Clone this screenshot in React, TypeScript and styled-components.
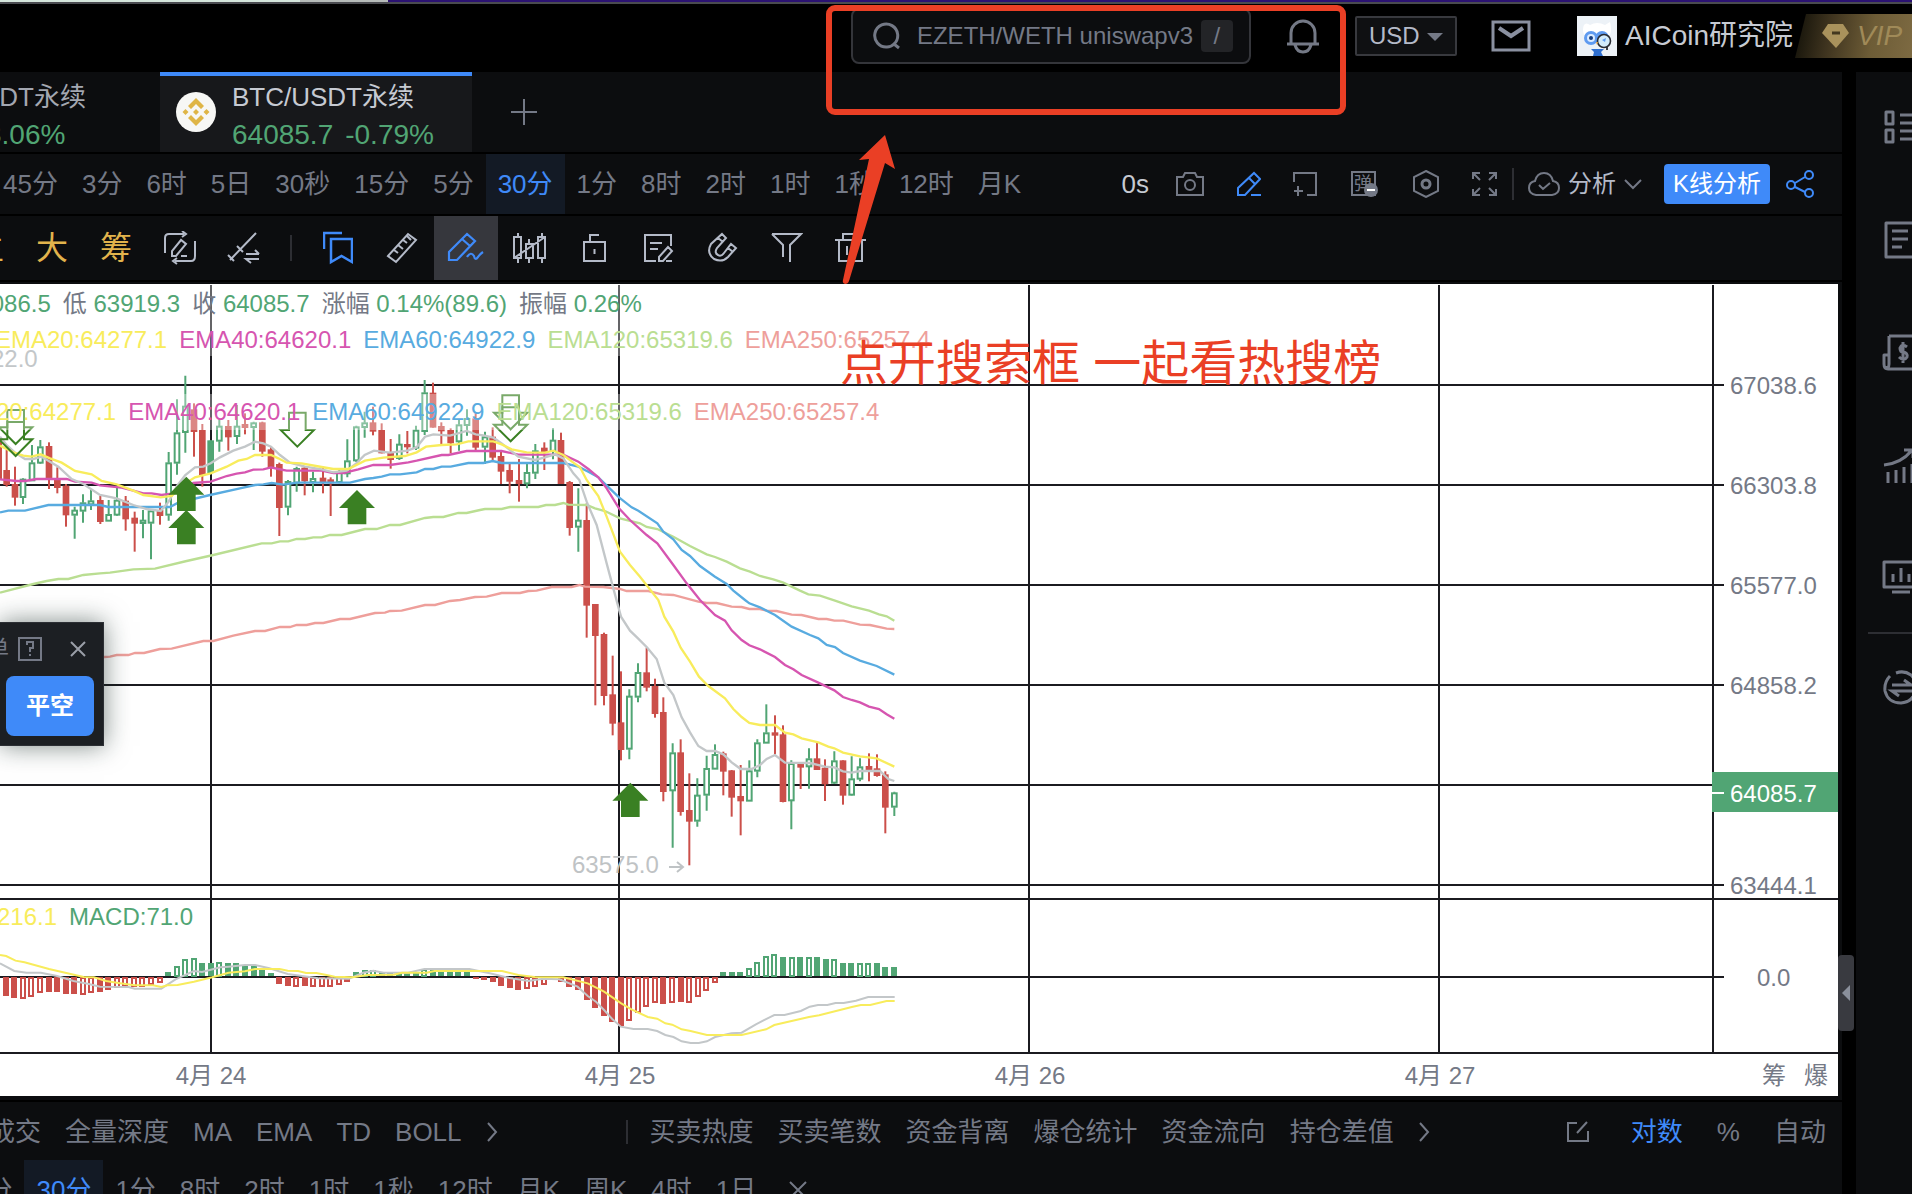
import React from 'react';
import styled, { createGlobalStyle } from 'styled-components';

const c = {
  panel: '#0c0d0f',
  muted: '#747986',
  icon: '#b4bac8',
  blue: '#3f8af9',
  green: '#51a574',
  red: '#cb4f4a',
  gold: '#e2b34c',
  grey: '#c3c7c9',
  yellow: '#f8ec5c',
  magenta: '#d655b0',
  sky: '#58abe0',
  lime: '#bade92',
  pink: '#ee9f9b',
  grid: '#1b1b20',
  signal: '#3a8023',
  note: '#ea3f25',
};

const font = '"Liberation Sans", "Noto Sans CJK SC", sans-serif';

const Global = createGlobalStyle`
  * { box-sizing: border-box; }
  body { margin: 0; background: #000; font-family: ${font}; overflow: hidden; }
  button, input, select { font: inherit; color: inherit; margin: 0; padding: 0; border: 0; background: none; }
  svg { display: block; flex: none; }
`;

/* ---------- shell ---------- */
const Page = styled.div`
  position: relative;
  height: 100vh;
  display: flex;
  flex-direction: column;
  overflow: hidden;
  color: ${c.muted};
`;
const WindowEdge = styled.div`
  height: 4px;
  flex: none;
  border-bottom: 2px solid #4a4b50;
  background: linear-gradient(90deg, #d5e6dc 0 300px, #b6bbb9 300px 388px, #2b1272 388px);
`;
const Header = styled.header`
  height: 68px;
  flex: none;
  display: flex;
  align-items: center;
  justify-content: flex-end;
  padding-bottom: 4px;
  background: #000;
`;
const Body = styled.div`
  flex: 1;
  min-height: 0;
  display: grid;
  grid-template-columns: minmax(0, 1fr) 56px;
  column-gap: 14px;
`;
const Main = styled.main`
  position: relative;
  background: ${c.panel};
  overflow: visible;
`;

/* ---------- header parts ---------- */
const SearchBox = styled.label`
  width: 400px;
  height: 56px;
  display: flex;
  align-items: center;
  padding: 0 18px 0 20px;
  border: 2px solid #34353a;
  border-radius: 8px;
  background: ${c.panel};
`;
const SearchInput = styled.input`
  flex: 1;
  min-width: 0;
  margin-left: 16px;
  font-size: 24px;
  line-height: 32px;
  outline: none;
  &::placeholder { color: ${c.muted}; opacity: 1; }
`;
const Key = styled.kbd`
  width: 32px;
  height: 32px;
  margin-right: -2px;
  border-radius: 4px;
  background: #232427;
  text-align: center;
  font: 24px/32px ${font};
`;
const IconButton = styled.button<{ $ml?: number; $color?: string }>`
  display: flex;
  margin-left: ${(p) => p.$ml ?? 0}px;
  color: ${(p) => p.$color ?? c.muted};
`;
const Currency = styled.label`
  position: relative;
  display: flex;
  width: 102px;
  height: 40px;
  margin-left: 36px;
  border: 2px solid #38393e;
  border-radius: 2px;
  background: #0f1012;
  color: ${c.icon};
  svg { position: absolute; right: 12px; top: 15px; pointer-events: none; }
`;
const CurrencySelect = styled.select`
  width: 100%;
  padding-left: 12px;
  appearance: none;
  font-size: 24px;
  line-height: 36px;
  outline: none;
`;
const UserLink = styled.a`
  display: flex;
  align-items: center;
  gap: 8px;
  margin-left: 46px;
  color: #c6cad2;
  font-size: 28px;
  line-height: 40px;
  text-decoration: none;
  white-space: nowrap;
`;
const Vip = styled.a`
  width: 117px;
  height: 44px;
  margin-left: 2px;
  padding-left: 27px;
  display: flex;
  align-items: center;
  gap: 8px;
  clip-path: polygon(11px 0, 100% 0, 100% 100%, 0 100%);
  background: linear-gradient(100deg, #111008 0%, #3f341f 30%, #6d5c36 65%, #7d6a42 100%);
  color: #a08a58;
  font-size: 28px;
  font-style: italic;
  text-decoration: none;
`;

/* ---------- tabs ---------- */
const TabBar = styled.nav`
  height: 82px;
  display: flex;
  border-bottom: 2px solid #000;
  color: #a7abb5;
`;
const TabButton = styled.button<{ $active?: boolean }>`
  width: ${(p) => (p.$active ? 312 : 160)}px;
  display: flex;
  align-items: center;
  gap: 16px;
  overflow: hidden;
  text-align: left;
  padding: ${(p) => (p.$active ? '0 0 4px 16px' : '0 0 4px')};
  border-top: 4px solid ${(p) => (p.$active ? c.blue : 'transparent')};
  background: ${(p) => (p.$active ? '#17181b' : 'transparent')};
  color: ${(p) => (p.$active ? '#c6cad2' : '#a3a7b1')};
`;
const TabText = styled.span<{ $cut?: boolean }>`
  display: flex;
  flex-direction: column;
  margin-left: ${(p) => (p.$cut ? -18 : 0)}px;
  padding-top: 8px;
  white-space: nowrap;
  font-size: 26px;
  line-height: 38px;
`;
const Quote = styled.span<{ $inset?: boolean }>`
  display: flex;
  gap: 12px;
  padding-left: ${(p) => (p.$inset ? 4 : 0)}px;
  color: ${c.green};
  font-size: 28px;
`;

/* ---------- toolbars ---------- */
const Bar = styled.div<{ $h: number }>`
  display: flex;
  align-items: center;
  height: ${(p) => p.$h}px;
  border-bottom: 2px solid #000;
  overflow: hidden;
  white-space: nowrap;
`;
const Period = styled.button<{ $active?: boolean }>`
  flex: none;
  height: 60px;
  padding: 0 12px;
  font-size: 26px;
  line-height: 60px;
  color: ${(p) => (p.$active ? c.blue : c.muted)};
  background: ${(p) => (p.$active ? '#131a25' : 'transparent')};
`;
const Periods = styled.div<{ $shift: number }>`
  display: flex;
  margin-left: ${(p) => p.$shift}px;
`;
const Tools = styled.div`
  display: flex;
  align-items: center;
  margin-left: auto;
  margin-right: 28px;
`;
const Lag = styled.span`
  color: #c6cad2;
  font-size: 26px;
  line-height: 32px;
`;
const Rule = styled.span<{ $h: number; $m: string }>`
  width: 2px;
  height: ${(p) => p.$h}px;
  margin: ${(p) => p.$m};
  background: #2d2e33;
`;
const Analyse = styled.button`
  display: flex;
  align-items: center;
  gap: 8px;
  color: ${c.icon};
  font-size: 24px;
  line-height: 36px;
  svg { color: ${c.muted}; }
`;
const Primary = styled.button`
  width: 106px;
  height: 40px;
  margin: 0 16px 0 22px;
  border-radius: 4px;
  background: ${c.blue};
  color: #fff;
  font-size: 24px;
  line-height: 40px;
`;
const Draw = styled.button<{ $tone?: 'gold' | 'blue'; $on?: boolean }>`
  width: 64px;
  height: 64px;
  flex: none;
  display: flex;
  align-items: center;
  justify-content: center;
  font-size: 32px;
  line-height: 64px;
  color: ${(p) => (p.$tone === 'gold' ? c.gold : p.$tone === 'blue' ? c.blue : c.icon)};
  background: ${(p) => (p.$on ? '#36373d' : 'transparent')};
`;
const DrawTools = styled.div`
  display: flex;
  align-items: center;
  margin-left: -44px;
`;
const Indicators = styled.div`
  height: 58px;
  padding-top: 2px;
  display: flex;
  align-items: center;
  overflow: hidden;
  white-space: nowrap;
`;
const Group = styled.div<{ $ml: number; $gap: number }>`
  display: flex;
  align-items: center;
  flex: none;
  gap: ${(p) => p.$gap}px;
  margin-left: ${(p) => p.$ml}px;
`;
const TextButton = styled.button<{ $on?: boolean }>`
  font-size: 26px;
  line-height: 40px;
  color: ${(p) => (p.$on ? c.blue : c.muted)};
`;
const Scale = styled.div`
  display: flex;
  align-items: center;
  margin: 0 16px 0 auto;
  gap: 34px;
  button:first-child { margin-right: 8px; }
`;

/* ---------- chart ---------- */
const ChartBox = styled.section`
  position: relative;
  height: 818px;
  margin-right: 4px;
  border-top: 2px solid ${c.panel};
  border-bottom: 4px solid ${c.panel};
  background: #fff;
  overflow: hidden;
`;
const Legend = styled.div<{ $top: number; $shift: number; $h: number }>`
  position: absolute;
  top: ${(p) => p.$top}px;
  left: 0;
  display: flex;
  gap: 12px;
  height: ${(p) => p.$h}px;
  font-size: 24px;
  line-height: ${(p) => p.$h}px;
  white-space: nowrap;
  background: rgba(255, 255, 255, 0.32);
  > :first-child { margin-left: ${(p) => p.$shift}px; }
`;
const Ink = styled.span<{ $c: string }>`
  color: ${(p) => p.$c};
`;
const Handle = styled.button`
  position: absolute;
  right: -12px;
  top: 883px;
  width: 16px;
  height: 76px;
  display: flex;
  align-items: center;
  justify-content: center;
  border-radius: 4px;
  background: #393a40;
  color: #8a8f9b;
`;

/* ---------- side rail ---------- */
const Rail = styled.aside`
  background: ${c.panel};
  overflow: hidden;
  padding: 35px 0 0 26px;
  display: flex;
  flex-direction: column;
`;
const RailButton = styled.button`
  display: flex;
  flex: none;
  width: 40px;
  height: 40px;
  margin-bottom: 73px;
  color: ${c.muted};
`;
const RailLine = styled.hr`
  width: 60px;
  height: 2px;
  margin: -40px 0 35px -14px;
  border: 0;
  background: #2d2e33;
  flex: none;
`;

/* ---------- floating parts ---------- */
const OrderPanel = styled.section`
  position: absolute;
  left: 0;
  top: 622px;
  width: 104px;
  height: 124px;
  padding: 14px 10px 10px 0;
  background: #1c1f23;
  border: 1px solid #2c2f34;
  border-left: 0;
  box-shadow: 0 0 24px rgba(20, 40, 35, 0.55);
`;
const OrderHead = styled.div`
  display: flex;
  align-items: center;
  height: 24px;
  margin-bottom: 15px;
  font-size: 22px;
  line-height: 24px;
`;
const Cut = styled.span`
  margin-left: -13px;
  margin-right: 9px;
`;
const CloseShort = styled.button`
  width: 88px;
  height: 60px;
  margin-left: 6px;
  border-radius: 8px;
  background: ${c.blue};
  color: #fff;
  font-size: 24px;
  font-weight: 700;
  line-height: 60px;
`;
const Highlight = styled.div`
  position: absolute;
  left: 826px;
  top: 5px;
  width: 520px;
  height: 110px;
  border: 6px solid ${c.note};
  border-radius: 9px;
  pointer-events: none;
`;
const Pointer = styled.svg`
  position: absolute;
  left: 836px;
  top: 130px;
  pointer-events: none;
`;
const Caption = styled.p`
  position: absolute;
  left: 840px;
  top: 334px;
  margin: 0;
  color: ${c.note};
  font-size: 48px;
  line-height: 60px;
  white-space: nowrap;
`;

/* ---------- icons ---------- */
type IconProps = { w?: number; h?: number; sw?: number; box?: string; children: React.ReactNode };
const Icon = ({ w = 32, h = 32, sw = 2, box, children }: IconProps) => (
  <svg width={w} height={h} viewBox={box ?? `0 0 ${w} ${h}`} fill="none" stroke="currentColor" strokeWidth={sw} aria-hidden="true">
    {children}
  </svg>
);

const Avatar = () => (
  <svg width="40" height="40" viewBox="0 0 40 40" aria-hidden="true">
    <rect width="40" height="40" fill="#edf2f7" />
    <path d="M7 9 Q9 6 13 9 Q20 5 28 9 L33 6 Q35 13 33 19 H7 Q5 13 7 9Z" fill="#fff" />
    <circle cx="14" cy="22" r="7" fill="#5f9bf0" />
    <circle cx="25" cy="22" r="7" fill="#5f9bf0" />
    <circle cx="14" cy="22" r="4" fill="#dcecff" />
    <circle cx="14" cy="22" r="2" fill="#173e7e" />
    <circle cx="27" cy="25" r="6.5" fill="#d3ecfb" stroke="#2a2c33" strokeWidth="1.6" />
    <path d="M25 24 l4 -2 l-1 4z" fill="#5f9bf0" />
    <path d="M30 31 v3" stroke="#2a2c33" strokeWidth="1.8" />
    <path d="M19 26 l2 0 l-1 3z" fill="#f0a63c" />
    <path d="M14 33 H27 L24 36 L26 40 H16 L17 36Z" fill="#2f6fcf" />
  </svg>
);

const Coin = () => (
  <svg width="40" height="40" viewBox="0 0 40 40" aria-hidden="true">
    <circle cx="20" cy="20" r="20" fill="#f7f7f5" />
    <g fill="#dfb546">
      <path d="M20 6 L28 14 L25 17 L20 12 L15 17 L12 14Z" />
      <path d="M20 34 L28 26 L25 23 L20 28 L15 23 L12 26Z" />
      <path d="M20 17 l3 3 l-3 3 l-3 -3z M9.500 17 l3 3 l-3 3 l-3 -3z M30.500 17 l3 3 l-3 3 l-3 -3z" />
    </g>
  </svg>
);

const chevron = <path d="M2 2 L10 11 L2 20" strokeWidth="2" />;

const drawIcons: Record<string, React.ReactNode> = {
  cycle: (
    <>
      <path d="M1 22 V7 Q1 3 5 3 H20 M18 0 l4 3 l-4 3" />
      <path d="M31 10 V25 Q31 30 27 30 H11 M13 27 l-4 3 l4 3" />
      <path d="M8 25 V20 L17 9 L22 13 L12 25Z M17 25 H23" />
    </>
  ),
  line: <path d="M3 29 L29 2 M1 24 L7 30 M10 15 L16 21 M19 23 H32 M28 19 l4 4 M32 28 H19 l5 4" />,
  bookmark: <path d="M8 8 H29 V31 L18.500 25 L8 31Z M1 18 V2 H19" strokeWidth="2.500" />,
  ruler: <path d="M2 25 L22 3 L30 9 L10 31Z M8 19 l4 3 M12 14 l5 4 M17 9 l4 3 M21 5 l4 4" />,
  pen: <path d="M2 29 V21 L20 3 L28 10 L10 29Z M15 8 L23 15 M20 26 q4 -6 7 -1 q1 5 4 1 q2 -3 5 -5" strokeWidth="2.200" />,
  candles: (
    <path d="M2 6 H9 V27 H2Z M14 13 H21 V27 H14Z M26 6 H33 V27 H26Z M6 2 V6 M6 27 V32 M17 8 V13 M17 27 V32 M30 2 V6 M30 27 V32 M2 27 L33 6" />
  ),
  lock: <path d="M6 11 H27 V30 H6Z M12 11 V4 H21 M16.500 18 V23" />,
  note: <path d="M14 30 H3 V4 H29 V15 M8 12 H20 M8 18 H16 M17 30 V26 L26 16 L30 20 L21 30Z M24 30 H30" />,
  magnet: <path d="M16 3 L20 7 L11 17 Q8 22 12 24 Q15 26 18 22 L25 13 L30 17 L22 26 Q16 32 8 28 Q0 22 5 13Z M12 7 L17 11 M22 17 L27 21" />,
  filter: <path d="M2 3 H31 L20 14 V31 M2 3 L13 14 V26" />,
  trash: <path d="M1 9 H32 M9 9 V3 H23 V9 M5 9 V30 H28 V9 M13 15 V24 M20 15 V24" />,
};

/* ---------- chart data ---------- */
// Plot geometry is stored in thirds of a pixel; each block has its own origin.
const origin = { left: [0, -12], mid: [1320, -12], low: [0, 888], right: [1680, 888] } as const;
type Block = keyof typeof origin;

// x, high, low, open/close top, open/close bottom; prefix g = rising, r = falling
const candles: [Block, string][] = [
  ['left',
    'r-4 450 600 475 598|r20 510 620 570 615|r45 560 677 612 653|g69 595 672 597 653|g96 495 603 548 603|g121 480 552 500 550|r147 487 627 498 597|r172 562 640 597 624|r198 612 740 617 706|g224 680 776 690 706|g249 643 728 668 694|g273 628 690 662 675|r301 648 732 660 726|g326 660 724 703 724|g351 622 708 660 706|r377 648 752 662 718|r404 695 815 713 731|g429 690 775 720 731|g453 688 838 692 730|r480 668 734 690 708|g506 516 722 548 706|g531 358 584 458 550|g556 287 518 378 458|r582 370 530 388 456|r607 432 620 450 585|g632 480 580 482 578|g658 418 515 438 484|r685 420 512 438 472|g711 375 492 438 470|r735 400 463 432 444|g761 425 510 428 443|r787 425 530 427 515|r813 500 590 508 565|r838 548 768 552 684|g864 600 706 604 682|g890 560 635 565 610|r914 560 646 563 604|g939 575 637 595 608|r969 560 640 593 608|r992 592 708 598 610|g1018 570 610 575 608|g1042 478 592 542 582|g1069 437 546 440 543|g1094 395 473 428 443|r1119 380 466 427 455|r1145 430 520 450 520|r1172 477 566 518 540|g1198 463 540 492 536|r1222 453 520 492 502|g1248 437 510 450 505|g1274 300 465 338 455|r1299 308 443 338 443|r1324 427 492 438 454|r1352 445 520 450 490|g1377 420 512 434 486|g1401 388 467 415 437|r1427 400 510 415 503'],
  ['mid',
    'g135 455 552 470 502|r158 442 545 470 533|r183 515 612 528 575|r209 550 640 570 605|r237 537 665 600 612|g261 550 625 577 612|g286 492 597 512 580|r313 487 570 503 516|g339 445 538 480 515|r363 458 612 480 612|r389 603 767 606 744|g415 625 815 720 742|r440 670 1073 720 977'],
  ['right',
    'r106 72 376 72 168|r132 158 376 162 348|r158 227 466 343 431|r183 274 541 427 510|g208 328 538 348 508|g234 250 367 277 352|r260 203 334 277 323|r285 296 413 318 402|r310 352 664 396 636|g338 490 803 518 633|r362 478 707 517 696|r388 580 856 690 725|g412 595 740 645 724|g440 527 692 565 646|g465 493 568 523 568|r490 515 646 520 575|r515 570 710 571 653|r542 555 766 648 664|g568 541 664 572 664|g592 478 592 488 574|g619 373 490 458 490|r645 406 523 457 467|r669 436 667 463 666|g694 541 748 550 663|r722 548 627 550 563|g747 505 626 536 561|r771 488 570 535 570|r795 538 663 563 613|g823 514 612 542 610|r849 541 674 541 647|g875 529 647 596 646|g900 535 604 560 598|r927 520 604 558 570|r951 523 590 565 588|r976 574 760 583 683|g1003 635 708 638 682'],
];

const averages: { color: string; parts: [Block, string][] }[] = [
  { color: c.pink, parts: [
    ['low', '0,280 312,231 330,230 350,225 385,225 405,219 432,219 480,207 515,206 610,183 640,183 700,167 765,153 795,153 840,141 870,141 890,135 920,135 945,129 970,129 1020,117 1050,117 1125,99 1155,98 1170,93 1205,92 1275,75 1305,75 1350,63'],
    ['mid', '60,960 105,951 140,950 185,939 240,939 265,933 290,932 335,921 395,921 418,915 435,920 490,921 540,927 560,933 625,933 665,943 700,945'],
    ['right', '415,65 440,69 470,69 515,80 545,81 568,87 600,87 620,92 650,93 695,104 725,105 775,117 800,117 823,122 850,122 900,134 930,135 980,146 1003,147']] },
  { color: c.lime, parts: [
    ['left', '0,938 100,912 140,903 175,897 205,897 250,885 300,880 330,878 400,868 465,866 560,843 640,825 785,790 815,790 840,784 865,784 890,777 915,777 940,772 965,772 990,765 1025,765 1095,747 1130,747 1170,735 1200,735 1275,714 1300,711 1330,711 1375,699 1400,699 1440,690'],
    ['mid', '135,687 185,687 210,681 295,681 318,675 345,675 370,669 385,674 440,675 465,685 495,693 540,715 600,730 620,741 652,747 700,770 750,798 800,823 825,831 860,845 900,865 930,875 960,888 1000,898 1030,908 1080,932 1105,943 1140,947 1185,962'],
    ['right', '849,70 875,79 927,92 957,103 980,109 1003,122']] },
  { color: c.sky, parts: [
    ['left', '0,697 25,692 75,692 145,675 300,675 325,681 510,681 540,665 580,657 630,645 720,625 765,615 790,613 815,609 850,614 890,608 1050,608 1095,597 1120,594 1145,590 1170,583 1200,583 1250,577 1275,567 1300,567 1325,560 1352,560 1405,549'],
    ['mid', '130,549 158,543 185,549 370,549 415,560 445,575 475,592 537,652 575,682 595,692 652,730 670,755 700,778 725,810 750,828 780,858 825,890 860,912 880,932 915,960'],
    ['right', '568,70 600,82 645,105 695,140 750,165 775,175 800,195 825,201 849,219 900,242 950,258 1003,284']] },
  { color: c.magenta, parts: [
    ['left', '0,598 50,603 75,603 110,597 200,597 225,605 275,608 300,616 365,623 400,632 430,640 455,640 485,645 520,640 556,625 580,609 632,605 680,588 710,581 735,577 760,569 790,568 813,562 835,567 860,572 965,572 1000,579 1030,579 1075,568 1120,555 1170,555 1225,547 1250,542 1325,525 1345,525 1400,513'],
    ['mid', '185,513 235,524 370,524 415,545 445,567 475,592 500,625 537,685 570,720 620,765 652,790 700,855 740,910 780,960'],
    ['right', '465,105 495,122 515,151 545,180 568,196 600,208 645,231 675,255 700,268 725,285 775,308 823,331 849,351 875,360 900,367 927,380 957,387 980,403 1003,416']] },
  { color: c.grey, parts: [
    ['left', '0,470 20,495 45,518 75,537 100,537 125,530 150,545 175,560 215,597 250,612 300,645 350,655 400,675 440,687 482,693 506,665 531,618 556,585 585,562 610,560 632,550 660,532 700,512 735,500 765,485 790,490 813,500 840,525 870,548 915,560 965,568 1000,577 1040,572 1069,550 1094,525 1122,512 1170,518 1222,512 1250,502 1275,470 1300,463 1350,467 1400,453'],
    ['mid', '107,463 130,466 160,473 185,490 235,530 285,540 315,532 345,523 370,535 400,580 418,600 440,665 470,735 500,850 520,925'],
    ['right', '183,110 210,152 234,175 262,203 290,237 313,308 340,345 365,412 390,457 415,498 440,513 465,513 490,523 515,547 542,567 575,567 600,555 620,537 645,525 675,548 750,549 795,560 823,562 849,574 875,578 900,573 960,573 985,597 1003,603']] },
  { color: c.yellow, parts: [
    ['left', '0,497 40,517 70,527 95,530 122,523 150,535 185,548 225,573 275,583 305,603 350,613 400,632 430,645 482,652 515,648 556,610 585,592 632,580 680,560 715,542 740,537 765,525 813,525 835,535 860,548 905,550 965,561 1000,567 1045,567 1095,542 1150,533 1215,528 1250,517 1278,500 1325,495 1370,493 1405,484'],
    ['mid', '160,484 185,493 215,508 260,517 315,518 340,512 370,525 400,548 420,562 440,600 475,648 500,710 540,815 570,855 600,890 655,960'],
    ['right', '313,110 340,155 362,203 390,245 417,290 445,318 495,355 520,387 545,411 568,429 600,435 645,435 675,458 700,463 725,475 775,487 805,500 823,505 849,518 900,529 950,535 1003,560']] },
];

const joinPoints = (parts: [Block, string][]) =>
  parts
    .flatMap(([b, s]) => s.split(' ').map((p) => {
      const [x, y] = p.split(',').map(Number);
      return `${x + origin[b][0]},${y + origin[b][1]}`;
    }))
    .join(' ');

// signed bar lengths, h marks a hollow bar
const histogram =
  '-15 -19 -21 -21h -19h -15h -15 -15 -17 -17 -17h -15h -15 -13 -10h -9h -9h -9h -7h -5h 4 10h 17h 18h 13 13 14h 13 13 11 11 8 3 -7 -9 -9h -9 -9h -9h -9h -7h -5 4 6h 6h 4 4 3 3 3 7h 7 6 6 6 4 -2 -3 -5 -9 -11 -13 -11h -9h -7h -1 -4h -10 -13 -23 -31 -39 -45 -49 -43h -35h -29h -25h -27 -25h -25 -25h -19h -13h -5h 4 4 4 8h 14h 20h 22h 19 19h 19 19h 19 17 17h 13 13 13h 13h 13 9 9'.split(' ');

const dif =
  '0,220 35,243 65,248 100,248 140,258 180,273 215,281 245,290 315,291 330,296 395,296 430,268 475,243 495,246 540,232 560,230 600,225 625,225 660,235 705,252 780,265 855,266 890,248 915,242 940,248 1000,248 1040,237 1150,237 1200,250 1240,262 1295,273 1330,266 1370,268 1415,290 1440,318 1460,335 1480,360 1500,387 1521,410 1552,417 1587,417 1610,423 1630,435 1650,441 1670,454 1692,459 1712,459 1732,454 1752,441 1792,430 1817,428 1852,403 1897,375 1922,375 1962,363 1984,350 2004,345 2027,345 2047,339 2067,339 2097,332 2127,321 2192,321';
const dea =
  '0,195 15,198 38,212 60,217 120,237 205,261 230,262 260,273 290,279 330,286 375,286 395,291 410,286 435,285 475,275 520,262 560,248 600,244 625,237 685,237 705,242 730,243 750,249 775,249 800,255 820,260 865,262 900,255 965,254 985,248 1045,248 1065,243 1230,243 1270,255 1310,261 1380,262 1440,280 1480,305 1522,340 1547,358 1587,381 1610,386 1630,400 1647,404 1670,418 1692,423 1732,435 1817,435 1877,418 1897,405 1982,381 2007,376 2087,351 2109,345 2132,345 2172,333 2192,333';

const prices: [string, number][] = [
  ['67038.6', 101], ['66303.8', 201], ['65577.0', 301], ['64858.2', 401], ['63444.1', 601],
];
const days: [string, number][] = [['4月 24', 211], ['4月 25', 620], ['4月 26', 1030], ['4月 27', 1440]];
const buys: [number, number][] = [[559, 578], [559, 678], [1071, 618], [1891, 1496]];
const sells: [number, number][] = [[47, 516], [47, 480], [892, 488], [1532, 472], [1532, 436]];

const ChartText = styled.text<{ $fill?: string }>`
  font: 24px ${font};
  fill: ${(p) => p.$fill ?? c.muted};
`;

const Chart = () => (
  <svg width="100%" height="812" role="img" aria-label="BTC/USDT">
    <g stroke={c.grid} strokeWidth="2">
      {[101, 201, 301, 401, 501, 601, 693].map((y) => (
        <line key={y} x1="0" x2="1724" y1={y} y2={y} />
      ))}
      <line x1="0" x2="100%" y1="615" y2="615" />
      <line x1="0" x2="100%" y1="769" y2="769" />
      {[211, 619, 1029, 1439, 1713].map((x) => (
        <line key={x} x1={x} x2={x} y1="1" y2="769" />
      ))}
    </g>
    <g transform="scale(0.33333)">
      {candles.map(([b, rows]) => (
        <g key={b} transform={`translate(${origin[b].join(' ')})`}>
          {rows.split('|').map((row) => {
            const up = row[0] === 'g';
            const [x, hi, lo, top, bottom] = row.slice(1).split(' ').map(Number);
            const color = up ? c.green : c.red;
            return (
              <g key={row} stroke={color} strokeWidth="6">
                <path d={`M${x} ${hi}V${up ? top : lo}${up ? `M${x} ${bottom}V${lo}` : ''}`} />
                {up ? (
                  <rect x={x - 7} y={top + 2} width="14" height={Math.max(bottom - top - 4, 4)} fill={x === 632 ? c.green : '#fff'} />
                ) : (
                  <rect x={x - 10} y={top} width="20" height={bottom - top} fill={color} stroke="none" />
                )}
              </g>
            );
          })}
        </g>
      ))}
      {averages.map((a) => (
        <polyline key={a.color} points={joinPoints(a.parts)} fill="none" stroke={a.color} strokeWidth="7" />
      ))}
      {buys.map(([x, y]) => (
        <path key={`${x}-${y}`} d={`M${x} ${y}l54 54h-26v49h-56v-49h-26z`} fill={c.signal} />
      ))}
      {sells.map(([x, y]) => (
        <path key={`${x}-${y}`} d={`M${x} ${y}l50 -50h-25v-52h-50v52h-25z`} fill="none" stroke={c.signal} strokeWidth="6" />
      ))}
    </g>
    {histogram.map((v, i) => {
      const n = parseInt(v, 10);
      const hollow = v.endsWith('h');
      const color = n > 0 ? c.green : c.red;
      const x = Math.round(894 - (histogram.length - 1 - i) * 8.54);
      const h = Math.abs(n);
      const y = n > 0 ? 692 - h : 693;
      return hollow ? (
        <rect key={i} x={x - 2} y={y + 1} width="4" height={Math.max(h - 1, 1)} fill="#fff" stroke={color} strokeWidth="2" />
      ) : (
        <rect key={i} x={x - 3} y={y} width="6" height={h} fill={color} />
      );
    })}
    <g transform="translate(0 606) scale(0.40816 0.33333)" fill="none" strokeWidth="2">
      <polyline points={dif} stroke={c.grey} vectorEffect="non-scaling-stroke" />
      <polyline points={dea} stroke={c.yellow} vectorEffect="non-scaling-stroke" />
    </g>
    <ChartText x="572" y="589" $fill="#bfc3c5">63575.0</ChartText>
    <path d="M669 583H683M677 578l6 5l-6 5" fill="none" stroke="#bfc3c5" strokeWidth="2" />
    {prices.map(([t, y]) => (
      <ChartText key={t} x="1730" y={y + 9}>{t}</ChartText>
    ))}
    <ChartText x="1757" y="702">0.0</ChartText>
    <rect x="1712" y="488" width="126" height="40" fill={c.green} />
    <path d="M1712 509H1724" stroke="#fff" strokeWidth="2" />
    <ChartText x="1730" y="518" $fill="#fff">64085.7</ChartText>
    {days.map(([t, x]) => (
      <ChartText key={t} x={x} y="800" textAnchor="middle">{t}</ChartText>
    ))}
    <ChartText x="1762" y="800">筹</ChartText>
    <ChartText x="1804" y="800">爆</ChartText>
  </svg>
);

const EmaLegend = ({ lead }: { lead: string }) => (
  <>
    <Ink $c={c.yellow}>{lead}</Ink>
    <Ink $c={c.magenta}>EMA40:64620.1</Ink>
    <Ink $c={c.sky}>EMA60:64922.9</Ink>
    <Ink $c={c.lime}>EMA120:65319.6</Ink>
    <Ink $c={c.pink}>EMA250:65257.4</Ink>
  </>
);

const Field = ({ label, value }: { label: string; value: string }) => (
  <span>
    {label && <Ink $c={c.muted}>{label} </Ink>}
    <Ink $c={c.green}>{value}</Ink>
  </span>
);

const topPeriods = ['45分', '3分', '6时', '5日', '30秒', '15分', '5分', '30分', '1分', '8时', '2时', '1时', '1秒', '12时', '月K'];
const bottomPeriods = ['5分', '30分', '1分', '8时', '2时', '1时', '1秒', '12时', '月K', '周K', '4时', '1日'];

export default function App() {
  return (
    <Page>
      <Global />
      <WindowEdge />
      <Header>
        <SearchBox>
          <Icon w={28} h={28} sw={3}>
            <path d="M21 22 A11.500 11.500 0 1 0 14 25 Q18 25 21 22 L26 26" />
          </Icon>
          <SearchInput type="text" placeholder="EZETH/WETH uniswapv3" aria-label="搜索" />
          <Key>/</Key>
        </SearchBox>
        <IconButton $ml={36} aria-label="通知">
          <Icon w={32} h={36} sw={3}>
            <path d="M4 26 V15 A12 12 0 0 1 28 15 V26 M0 26 H32 M8 27 Q10 34 16 34 Q22 34 24 27" />
          </Icon>
        </IconButton>
        <Currency aria-label="货币">
          <CurrencySelect defaultValue="USD" aria-label="货币"><option>USD</option></CurrencySelect>
          <svg width="16" height="8" viewBox="0 0 16 8"><path d="M0 0H16L8 8Z" fill={c.muted} /></svg>
        </Currency>
        <IconButton $ml={34} $color="#8a90a0" aria-label="邮件">
          <Icon w={40} h={32} sw={3}><path d="M2 2H38V30H2Z" /><path d="M8 8L20 16L32 8" strokeWidth="4" /></Icon>
        </IconButton>
        <UserLink href="#user"><Avatar />AICoin研究院</UserLink>
        <Vip href="#vip">
          <svg width="27" height="24" viewBox="0 0 27 24"><path d="M6 0H21L27 9L14 24L0 9Z" fill="#a9925c" /><path d="M10 9H18" stroke="#43381f" strokeWidth="3" /></svg>
          VIP
        </Vip>
      </Header>

      <Body>
        <Main>
          <TabBar>
            <TabButton><TabText $cut>SDT永续<Quote $inset>3.06%</Quote></TabText></TabButton>
            <TabButton $active>
              <Coin />
              <TabText>BTC/USDT永续<Quote><span>64085.7</span><span>-0.79%</span></Quote></TabText>
            </TabButton>
            <IconButton $ml={39} aria-label="新标签">
              <Icon w={26} h={80}><path d="M0 40H26M13 27V53" /></Icon>
            </IconButton>
          </TabBar>

          <Bar $h={62}>
            <Periods $shift={-9}>
              {topPeriods.map((p) => <Period key={p} $active={p === '30分'}>{p}</Period>)}
            </Periods>
            <Tools>
              <Lag>0s</Lag>
              <IconButton $ml={27} aria-label="截图">
                <Icon w={28} h={24}><path d="M1 5H7L9 1H19L21 5H27V23H1Z" /><circle cx="14" cy="13" r="5" /></Icon>
              </IconButton>
              <IconButton $ml={33} $color={c.blue} aria-label="画线">
                <Icon w={24} h={26}><path d="M1 24V17L17 2L23 8L8 24Z M12 7L18 13 M14 24H24" /></Icon>
              </IconButton>
              <IconButton $ml={32} aria-label="添加窗口">
                <Icon w={24} h={26}><path d="M1 11V2H23V24H14M1 20H10M5 15V25" /></Icon>
              </IconButton>
              <IconButton $ml={34} aria-label="弹幕">
                <svg width="28" height="26" viewBox="0 0 28 26">
                  <path d="M1 1H24V24H1Z" fill="none" stroke={c.muted} strokeWidth="2" />
                  <text x="3" y="19" fontSize="18" fill={c.muted} fontFamily="Noto Sans CJK SC, sans-serif">弹</text>
                  <circle cx="20" cy="19" r="7" fill={c.muted} />
                  <path d="M16 19H24" stroke="#fff" strokeWidth="2" />
                </svg>
              </IconButton>
              <IconButton $ml={34} aria-label="设置">
                <Icon w={26} h={28}><path d="M13 1L25 7V21L13 27L1 21V7Z" /><circle cx="13" cy="14" r="4" strokeWidth="3" /></Icon>
              </IconButton>
              <IconButton $ml={33} aria-label="全屏">
                <Icon w={25} h={26}><path d="M1 8V2H8M1 2L8 9M17 2H24V8M24 2L17 9M1 18V24H8M1 24L8 17M24 18V24H17M24 24L17 17" /></Icon>
              </IconButton>
              <Rule $h={32} $m="0 14px 0 15px" />
              <Analyse>
                <Icon w={32} h={25}><path d="M8 23Q1 22 1 16Q1 10 7 9Q9 1 16 1Q23 1 25 9Q31 10 31 16Q31 22 24 23Z M11 13L15 17L22 11" /></Icon>
                分析
                <Icon w={18} h={12}><path d="M1 2L9 10L17 2" /></Icon>
              </Analyse>
              <Primary>K线分析</Primary>
              <IconButton $color={c.blue} aria-label="分享">
                <Icon w={28} h={28} sw={2}><circle cx="5" cy="15" r="4" /><circle cx="23" cy="5" r="4" /><circle cx="23" cy="23" r="4" /><path d="M9 13L19 7M9 17L19 22" /></Icon>
              </IconButton>
            </Tools>
          </Bar>

          <Bar $h={66}>
            <DrawTools>
              <Draw $tone="gold">主</Draw>
              <Draw $tone="gold">大</Draw>
              <Draw $tone="gold">筹</Draw>
              <Draw aria-label="循环画线"><Icon w={32} h={34}>{drawIcons.cycle}</Icon></Draw>
              <Draw aria-label="切换线型"><Icon w={34} h={34}>{drawIcons.line}</Icon></Draw>
              <Rule $h={26} $m="0 14px" />
              <Draw $tone="blue" aria-label="书签"><Icon w={30} h={34}>{drawIcons.bookmark}</Icon></Draw>
              <Draw aria-label="测量"><Icon w={32} h={34}>{drawIcons.ruler}</Icon></Draw>
              <Draw $tone="blue" $on aria-label="画笔"><Icon w={38} h={34}>{drawIcons.pen}</Icon></Draw>
              <Draw aria-label="蜡烛"><Icon w={36} h={34}>{drawIcons.candles}</Icon></Draw>
              <Draw aria-label="锁定"><Icon w={33} h={34}>{drawIcons.lock}</Icon></Draw>
              <Draw aria-label="笔记"><Icon w={33} h={34}>{drawIcons.note}</Icon></Draw>
              <Draw aria-label="磁铁"><Icon w={33} h={34}>{drawIcons.magnet}</Icon></Draw>
              <Draw aria-label="筛选"><Icon w={33} h={34}>{drawIcons.filter}</Icon></Draw>
              <Draw aria-label="删除"><Icon w={33} h={34}>{drawIcons.trash}</Icon></Draw>
            </DrawTools>
          </Bar>

          <ChartBox>
            <Chart />
            <Legend $top={0} $shift={-36} $h={40}>
              <Field label="" value="64086.5" />
              <Field label="低" value="63919.3" />
              <Field label="收" value="64085.7" />
              <Field label="涨幅" value="0.14%(89.6)" />
              <Field label="振幅" value="0.26%" />
            </Legend>
            <Legend $top={40} $shift={-5} $h={32}><EmaLegend lead="EMA20:64277.1" /></Legend>
            <Legend $top={64} $shift={-9} $h={22}><Ink $c={c.grey}>22.0</Ink></Legend>
            <Legend $top={110} $shift={-4} $h={36}><EmaLegend lead="20:64277.1" /></Legend>
            <Legend $top={618} $shift={-3} $h={30}>
              <Ink $c={c.yellow}>216.1</Ink>
              <Ink $c={c.green}>MACD:71.0</Ink>
            </Legend>
          </ChartBox>

          <Bar $h={2} />
          <Indicators>
            <Group $ml={-11} $gap={24}>
              {['成交', '全量深度', 'MA', 'EMA', 'TD', 'BOLL'].map((t) => <TextButton key={t}>{t}</TextButton>)}
              <IconButton aria-label="更多主图指标"><Icon w={12} h={22}>{chevron}</Icon></IconButton>
            </Group>
            <Rule $h={24} $m="0 0 0 128px" />
            <Group $ml={22} $gap={24}>
              {['买卖热度', '买卖笔数', '资金背离', '爆仓统计', '资金流向', '持仓差值'].map((t) => <TextButton key={t}>{t}</TextButton>)}
              <IconButton aria-label="更多副图指标"><Icon w={12} h={22}>{chevron}</Icon></IconButton>
            </Group>
            <Scale>
              <IconButton aria-label="导出"><Icon w={22} h={22}><path d="M10 2H1V20H21V10M10 12L20 1" /></Icon></IconButton>
              <TextButton $on>对数</TextButton>
              <TextButton>%</TextButton>
              <TextButton>自动</TextButton>
            </Scale>
          </Indicators>
          <Bar $h={62}>
            <Periods $shift={-40}>
              {bottomPeriods.map((p) => <Period key={p} $active={p === '30分'}>{p}</Period>)}
            </Periods>
            <IconButton $ml={21} aria-label="关闭"><Icon w={18} h={18}><path d="M1 1L17 17M17 1L1 17" /></Icon></IconButton>
          </Bar>
          <Handle aria-label="展开侧栏"><svg width="8" height="16" viewBox="0 0 8 16"><path d="M8 0V16L0 8Z" fill="currentColor" /></svg></Handle>
        </Main>

        <Rail>
          <RailButton aria-label="自选">
            <Icon w={40} h={40} sw={3}><path d="M4 5H11V17H4Z M4 23H11V35H4Z M18 8H40M18 16H40M18 24H40M18 32H40" strokeLinejoin="round" /></Icon>
          </RailButton>
          <RailButton aria-label="资讯">
            <Icon w={40} h={40} sw={3}><path d="M4 3H36V37H4Z M10 11H26M10 19H26M10 27H20" strokeLinejoin="round" /></Icon>
          </RailButton>
          <RailButton aria-label="资产">
            <Icon w={40} h={40} sw={3}>
              <path d="M7 3H38V36H6Q2 36 2 31V22H7M7 3V31Q7 36 3 34" strokeLinejoin="round" />
              <path d="M25 14Q20 10 18 15Q18 19 21 19Q26 20 25 24Q22 29 17 24M21 9V30" />
            </Icon>
          </RailButton>
          <RailButton aria-label="趋势">
            <Icon w={40} h={40} sw={3}><path d="M2 19Q20 17 30 4M22 4H31V12M6 26V37M14 24V37M22 21V37M30 18V37" /></Icon>
          </RailButton>
          <RailButton aria-label="行情">
            <Icon w={40} h={40} sw={3}><path d="M2 3H40V28H2Z M11 15V23M19 9V23M27 15V23M10 33H28" strokeLinejoin="round" /></Icon>
          </RailButton>
          <RailLine />
          <RailButton aria-label="兑换">
            <Icon w={40} h={40} sw={3}><path d="M14 4Q22 1 29 6Q35 12 34 21Q31 33 19 34Q6 34 3 22Q2 13 8 7M10 16H29L22 11M30 22H10L17 27" /></Icon>
          </RailButton>
        </Rail>
      </Body>

      <OrderPanel>
        <OrderHead>
          <Cut>单</Cut>
          <Icon w={24} h={24}><path d="M1 1H23V23H1Z M9 8V5H15V11H12V15 M12 17V19" /></Icon>
          <IconButton $ml={28} $color="#9a9ea8" aria-label="关闭"><Icon w={16} h={16}><path d="M1 1L15 15M15 1L1 15" /></Icon></IconButton>
        </OrderHead>
        <CloseShort>平空</CloseShort>
      </OrderPanel>

      <Highlight />
      <Pointer width="64" height="156" viewBox="0 0 64 156">
        <path d="M49 5L59 39L49 33L13 151Q12 154 9 154Q6 153 7 150L33 29L23 30Z" fill={c.note} />
      </Pointer>
      <Caption>点开搜索框 一起看热搜榜</Caption>
    </Page>
  );
}
